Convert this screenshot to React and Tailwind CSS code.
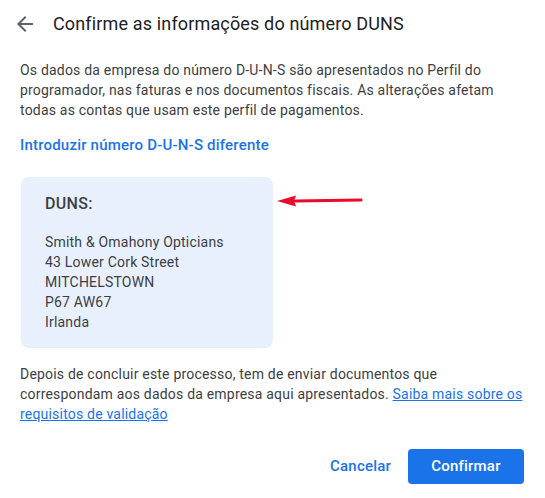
export default function App() {
  return (
    <div className="w-[545px] h-[498px] bg-white text-[#3c4043]" style={{ fontFamily: "Roboto, 'Liberation Sans', sans-serif" }}>
      <div className="h-12 flex items-center">
        <svg className="ml-[13px]" width="24" height="24" viewBox="0 0 24 24" fill="#5f6368">
          <path d="M20 11H7.83l5.59-5.59L12 4l-8 8 8 8 1.41-1.41L7.83 13H20v-2z" />
        </svg>
        <h1 className="ml-[16px] text-[18px] text-[#202124] leading-6 tracking-[0.15px]">Confirme as informações do número DUNS</h1>
      </div>
      <div className="px-5">
        <p className="mt-3 text-[14px] leading-5 tracking-[0.2px]">
          Os dados da empresa do número D-U-N-S são apresentados no Perfil do programador, nas faturas e nos documentos fiscais. As alterações afetam todas as contas que usam este perfil de pagamentos.
        </p>
        <div className="mt-[15px] text-[15px] leading-5 font-medium text-[#1a73e8] tracking-[0.2px]">
          Introduzir número D-U-N-S diferente
        </div>
        <div className="relative mt-[22px] ml-px w-[252px] rounded-lg bg-[#e8f0fe] px-6 pt-[15px] pb-4">
          <div className="text-[16px] leading-6 font-medium text-[#3c4043] tracking-[0.3px]">DUNS:</div>
          <div className="mt-4 text-[14px] leading-5 tracking-[0.2px]">
            <div>Smith &amp; Omahony Opticians</div>
            <div>43 Lower Cork Street</div>
            <div>MITCHELSTOWN</div>
            <div>P67 AW67</div>
            <div>Irlanda</div>
          </div>
          <svg className="absolute left-[254px] top-[17px]" width="90" height="14" viewBox="0 0 90 14">
            <path d="M20 7 L86 6" stroke="#ea0a2a" strokeWidth="3" strokeLinecap="round" />
            <path d="M2 7 L21 1.5 L19 7 L21 12.5 Z" fill="#ea0a2a" />
          </svg>
        </div>
        <p className="mt-4 text-[14px] leading-5 tracking-[0.2px]">
          Depois de concluir este processo, tem de enviar documentos que correspondam aos dados da empresa aqui apresentados.{" "}
          <a className="text-[#1a73e8] underline">Saiba mais sobre os requisitos de validação</a>
        </p>
      </div>
      <div className="mt-[25px] flex justify-end items-center pr-[21px]">
        <button className="text-[15px] font-medium text-[#1a73e8] tracking-[0.2px] mr-[17px]">Cancelar</button>
        <button className="w-[116px] h-[35px] rounded bg-[#1a73e8] text-white text-[15px] font-medium tracking-[0.2px]">Confirmar</button>
      </div>
    </div>
  );
}
